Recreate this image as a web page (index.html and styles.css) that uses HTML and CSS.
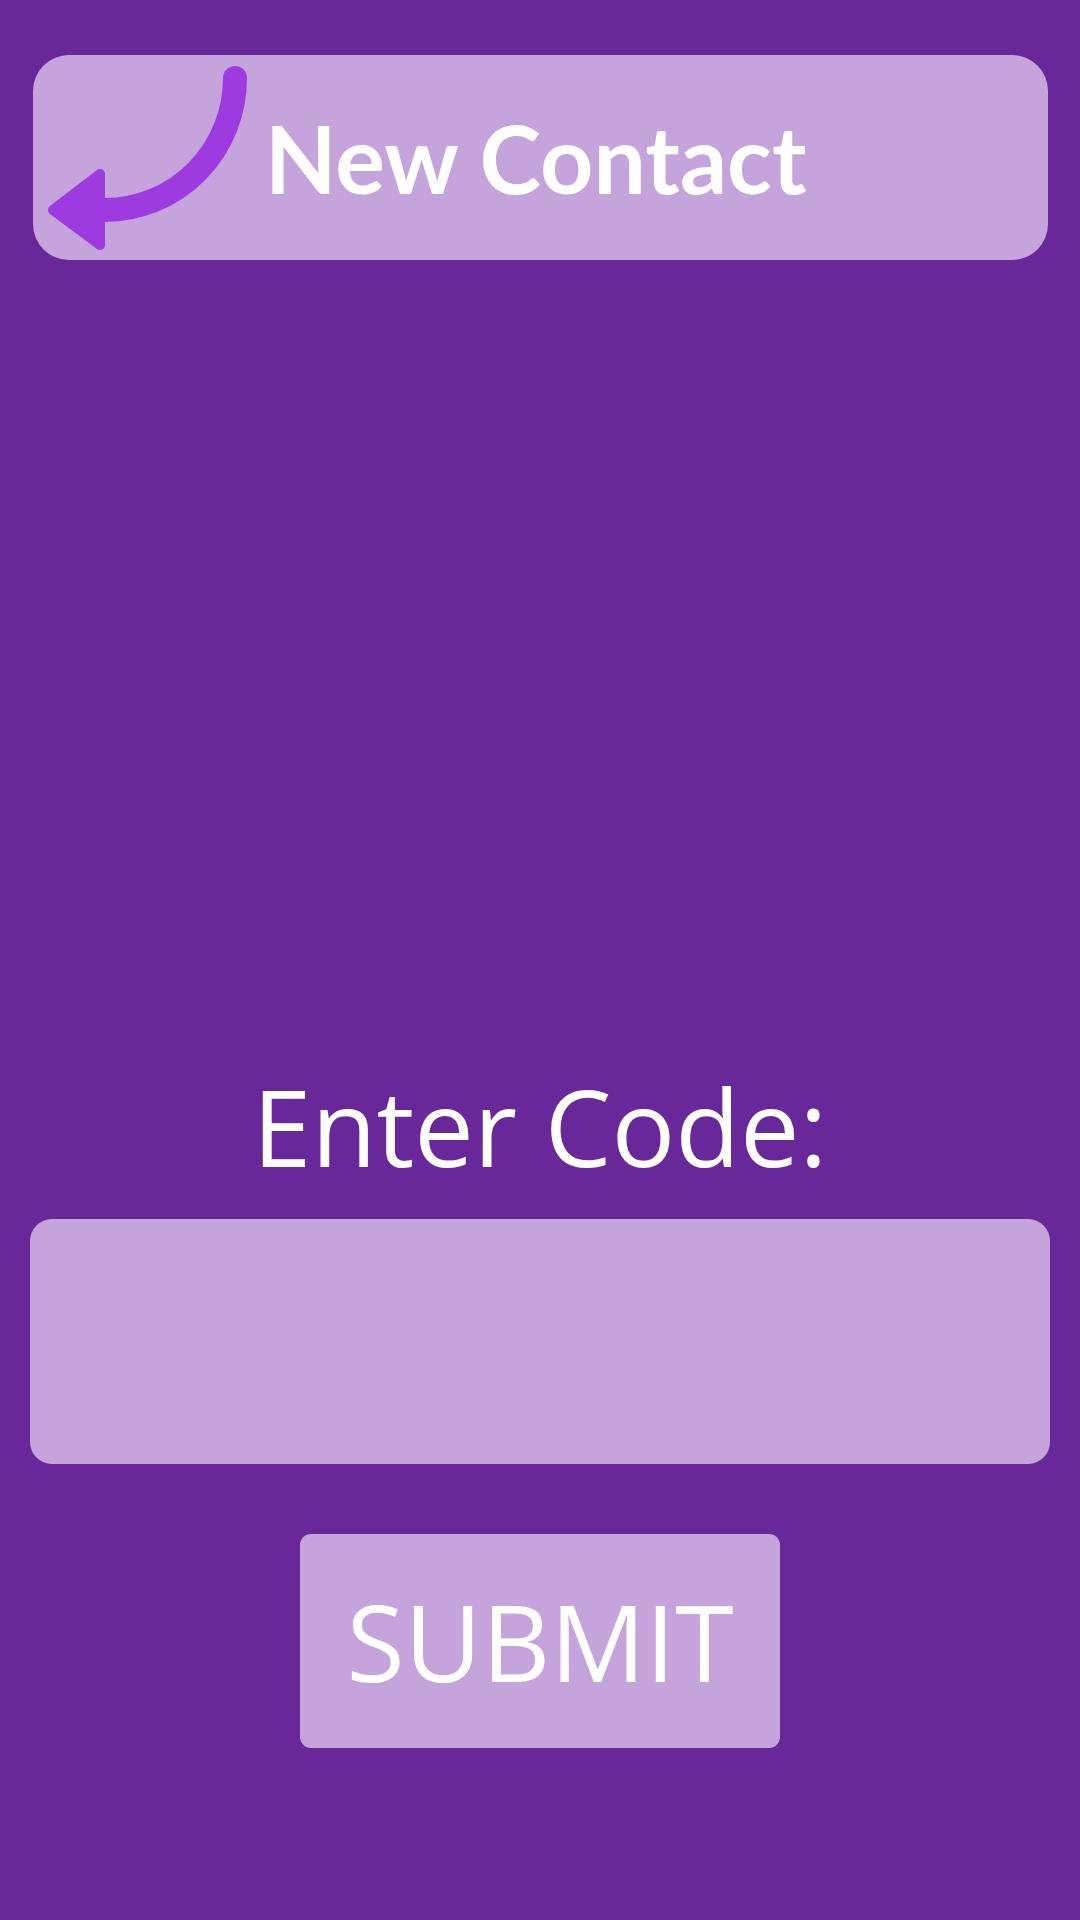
FILE: index.html
```html
<!DOCTYPE html>
<html lang="en">
<head>
<meta charset="utf-8">
<title>New Contact</title>
<link rel="stylesheet" href="styles.css">
</head>
<body>
  <header class="top-card">
    <svg class="back-arrow" viewBox="0 0 232 205" width="232" height="205" aria-hidden="true">
      <path d="M202 23 A130 132 0 0 1 72 155" fill="none" stroke="#9d3be1" stroke-width="24" stroke-linecap="round"/>
      <polygon points="67,119 67,190 20,155" fill="#9d3be1" stroke="#9d3be1" stroke-width="10" stroke-linejoin="round"/>
    </svg>
    <h1 class="title">New Contact</h1>
  </header>
  <main class="code-form">
    <label class="code-label" for="code">Enter Code:</label>
    <div class="code-input" id="code"></div>
    <button class="submit-btn" type="button">SUBMIT</button>
  </main>
</body>
</html>
```
FILE: styles.css
```css
html, body {
  margin: 0;
  padding: 0;
}
body {
  background: #69289a;
  width: 1080px;
  height: 1920px;
  overflow: hidden;
  font-family: "Open Sans", "Liberation Sans", sans-serif;
}
.top-card {
  margin: 55px 32px 0 33px;
  height: 205px;
  background: #c4a4db;
  border-radius: 36px;
  display: flex;
  align-items: center;
}
.back-arrow {
  flex: 0 0 232px;
  display: block;
}
.title {
  margin: 0;
  font-family: Lato, "Liberation Sans", sans-serif;
  font-weight: 700;
  font-size: 93px;
  line-height: 1;
  color: #ffffff;
  position: relative;
  top: 1px;
}
.code-form {
  display: flex;
  flex-direction: column;
  align-items: center;
  margin-top: 813px;
}
.code-label {
  font-size: 106px;
  line-height: 1;
  color: #ffffff;
  height: 106px;
}
.code-input {
  margin-top: 40px;
  align-self: stretch;
  margin-left: 30px;
  margin-right: 30px;
  height: 245px;
  background: #c4a4db;
  border-radius: 22px;
}
.submit-btn {
  margin-top: 70px;
  width: 480px;
  height: 214px;
  border: none;
  border-radius: 11px;
  background: #c4a4db;
  color: #ffffff;
  font-family: "Open Sans", "Liberation Sans", sans-serif;
  font-size: 106px;
  line-height: 1;
  padding: 0;
  display: flex;
  align-items: center;
  justify-content: center;
}
```
